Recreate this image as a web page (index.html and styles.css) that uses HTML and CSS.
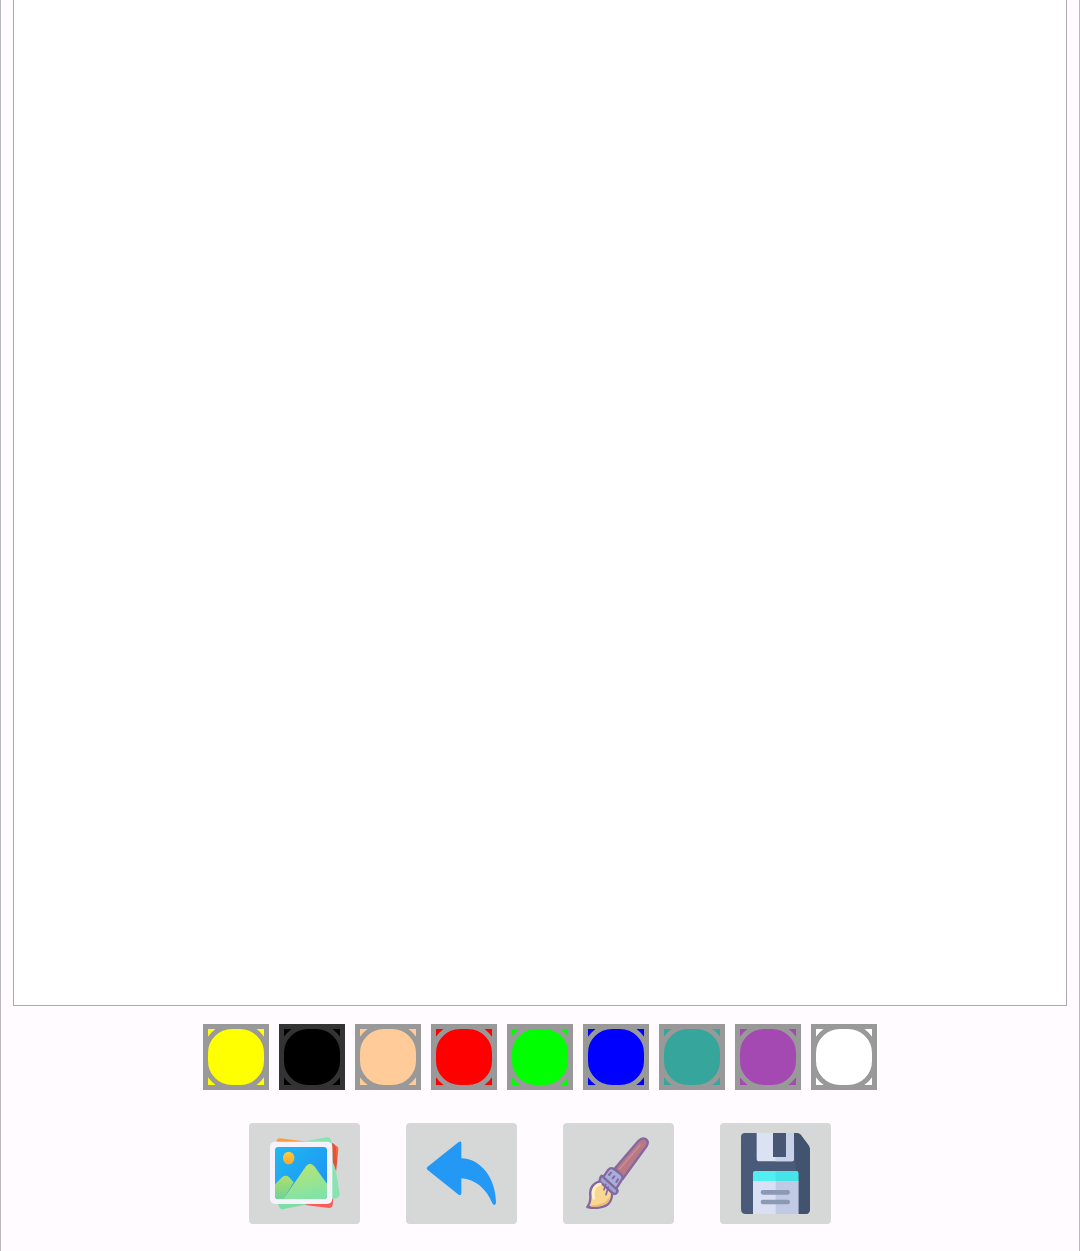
FILE: index.html
```html
<!DOCTYPE html>
<html lang="en">
<head>
<meta charset="utf-8">
<meta name="viewport" content="width=device-width, initial-scale=1">
<title>Drawing pad</title>
<link rel="stylesheet" href="styles.css">
</head>
<body>
<main class="pad">
  <canvas class="sheet" aria-label="Drawing area"></canvas>
  <div class="palette" role="group" aria-label="Colours">
    <button class="swatch yellow" type="button" aria-label="Yellow"></button>
    <button class="swatch black" type="button" aria-label="Black" aria-pressed="true"></button>
    <button class="swatch skin" type="button" aria-label="Skin"></button>
    <button class="swatch red" type="button" aria-label="Red"></button>
    <button class="swatch green" type="button" aria-label="Green"></button>
    <button class="swatch blue" type="button" aria-label="Blue"></button>
    <button class="swatch teal" type="button" aria-label="Teal"></button>
    <button class="swatch purple" type="button" aria-label="Purple"></button>
    <button class="swatch white" type="button" aria-label="White"></button>
  </div>
  <div class="tools" role="group" aria-label="Tools">
    <button class="tool" type="button" aria-label="Gallery">
      <svg class="icon" viewBox="27 24 333 303" aria-hidden="true">
        <defs>
          <linearGradient id="sky" x1="0" y1="0" x2="1" y2="1"><stop offset="0" stop-color="#22b8f0"/><stop offset="1" stop-color="#1b8ff5"/></linearGradient>
          <linearGradient id="hill" x1="0" y1="0" x2=".3" y2="1"><stop offset="0" stop-color="#bfe56b"/><stop offset="1" stop-color="#84e3a4"/></linearGradient>
          <linearGradient id="hill2" x1="0" y1="0" x2="0" y2="1"><stop offset="0" stop-color="#b0df68"/><stop offset="1" stop-color="#6fd399"/></linearGradient>
          <linearGradient id="sun" x1="0" y1="0" x2="0" y2="1"><stop offset="0" stop-color="#ffcb3d"/><stop offset="1" stop-color="#fba72b"/></linearGradient>
          <linearGradient id="card" x1="0" y1="0" x2="0" y2="1"><stop offset="0" stop-color="#ff7547"/><stop offset=".4" stop-color="#d9402e"/><stop offset="1" stop-color="#ff5e5a"/></linearGradient>
        </defs>
        <path d="M118 70q-7 0-8 8v12h100v-9z" fill="#ff9b35"/>
        <path d="M200 84l88 8q8 2 7 11l-17 167q-2 9-11 9l-72-9z" fill="url(#card)"/>
        <path d="M180 82l80-15q10-2 13 7l26 162q1 10-9 13l-14 3V100z" fill="#88e3b0"/>
        <path d="M112 264l6 13q3 7 11 6l80-17z" fill="#7edda5"/>
        <path d="M276 84q12 4 12 16v64l-10-24z" fill="#e35239"/>
        <rect x="90" y="80" width="187" height="187" rx="15" fill="#f5f2fc"/>
        <rect x="105" y="96" width="156" height="156" rx="10" fill="url(#sky)"/>
        <path d="M105 208l22-22q10-8 20 0l14 16-30 50h-16q-10 0-10-10z" fill="url(#hill2)"/>
        <path d="M130 252l68-98q12-15 25 0l38 52v36q0 10-10 10z" fill="url(#hill)"/>
        <ellipse cx="146" cy="129" rx="17" ry="19" fill="url(#sun)"/>
      </svg>
    </button>
    <button class="tool" type="button" aria-label="Undo">
      <svg class="icon" viewBox="27 24 333 303" aria-hidden="true">
        <path d="M91 156L185 81q8-4 8 3v46c58 1 103 59 104 132q0 8-5 8-4 0-6-5c-18-44-51-72-93-75v45q0 8-8 4L91 164q-4-4 0-8z" fill="#2398f5"/>
      </svg>
    </button>
    <button class="tool" type="button" aria-label="Brush">
      <svg class="icon" viewBox="27 24 333 303" aria-hidden="true">
        <g stroke="#84689f" stroke-width="7" stroke-linejoin="round" stroke-linecap="round">
          <path d="M183 160l70-82q11-11 22-6 11 7 3 21l-71 98z" fill="#b87984"/>
          <path d="M138 199c-20 4-32 21-29 43 1 16-2 25-9 34 27 6 55 1 66-13 8-11 9-20 8-30z" fill="#f9d791"/>
          <path d="M149 184l14-20q6-7 15-3l22 16q9 8 4 16l-19 31-39-28z" fill="#a6aed9"/>
          <path d="M143 182l46 42q4 4-1 10-5 5-11 1l-38-34q-4-4-1-10 2-7 5-9z" fill="#9ba6d6"/>
          <path d="M155 208l-5 16m13-8l-7 23" fill="none" stroke-width="5"/>
          <path d="M171 173l-6 7m16 4l-5 6m16 3l-5 8" fill="none" stroke-width="6"/>
        </g>
        <path d="M139 207c-19 5-24 22-20 43" fill="none" stroke="#fff0cd" stroke-width="8" stroke-linecap="round"/>
        <path d="M167 249q-13 25-55 24" fill="none" stroke="#efbd6d" stroke-width="5"/>
        <path d="M195 164l64-75" fill="none" stroke="#c58d94" stroke-width="5"/>
      </svg>
    </button>
    <button class="tool" type="button" aria-label="Save">
      <svg class="icon" viewBox="27 24 333 303" aria-hidden="true">
        <path d="M102 54h155q7 0 12 5l23 31q5 7 5 15v177q0 15-14 15H104q-14 0-14-15V66q0-12 12-12z" fill="#495b79"/>
        <path d="M249 54h8q7 0 12 5l23 31q5 7 5 15v177q0 15-14 15h-22z" fill="#42536f"/>
        <path d="M137 54h112v77q0 8-8 8h-96q-8 0-8-8z" fill="#dbe2f3"/>
        <path d="M225 54h24v77q0 8-8 8h-48v-13h32z" fill="#c8d1e8"/>
        <path d="M186 54h39v72h-39z" fill="#465674"/>
        <path d="M126 198h136v99H126z" fill="#d9e0f4"/>
        <path d="M194 198h68v99h-68z" fill="#c0cae5"/>
        <path d="M126 198v-24q0-6 6-6h124q6 0 6 6v24z" fill="#52eff2"/>
        <path d="M194 168h62q6 0 6 6v24h-68z" fill="#46e3e8"/>
        <path d="M156 232h74m-74 29h74" stroke="#8c99b3" stroke-width="14" stroke-linecap="round"/>
      </svg>
    </button>
  </div>
</main>
</body>
</html>
```
FILE: styles.css
```css
* {
  box-sizing: border-box;
}

body {
  margin: 0;
  background: #fffbff;
  font-family: Roboto, sans-serif;
}

.pad {
  display: flex;
  flex-direction: column;
  min-height: 100vh;
  padding: 0 12px 27px;
  border: solid #b9b6bd;
  border-width: 0 1px;
}

.sheet {
  display: block;
  flex: 1;
  width: 100%;
  min-height: 0;
  background: #fff;
  border: solid #a9a9b2;
  border-width: 0 1px 1px;
}

.palette {
  display: flex;
  flex-wrap: wrap;
  justify-content: center;
  gap: 10px;
  margin-top: 18px;
}

.swatch {
  --ring: #999;
  position: relative;
  width: 66px;
  height: 66px;
  padding: 0;
  border: 5px solid var(--ring);
  border-radius: 0;
  cursor: pointer;
}

.swatch::after {
  content: "";
  position: absolute;
  inset: -5px;
  border: 5px solid var(--ring);
  border-radius: 29px;
}

.yellow { background: #ff0; }
.black { --ring: #333; background: #000; }
.skin { background: #fc9; }
.red { background: #f00; }
.green { background: #0f0; }
.blue { background: #00f; }
.teal { background: #36a69c; }
.purple { background: #a349b1; }
.white { background: #fff; }

.tools {
  display: flex;
  flex-wrap: wrap;
  justify-content: center;
  gap: 46px;
  margin-top: 33px;
}

.tool {
  width: 111px;
  height: 101px;
  padding: 0;
  border: 0;
  border-radius: 4px;
  background: #d6d8d7;
  cursor: pointer;
}

.icon {
  display: block;
  width: 100%;
  height: 100%;
}
```
